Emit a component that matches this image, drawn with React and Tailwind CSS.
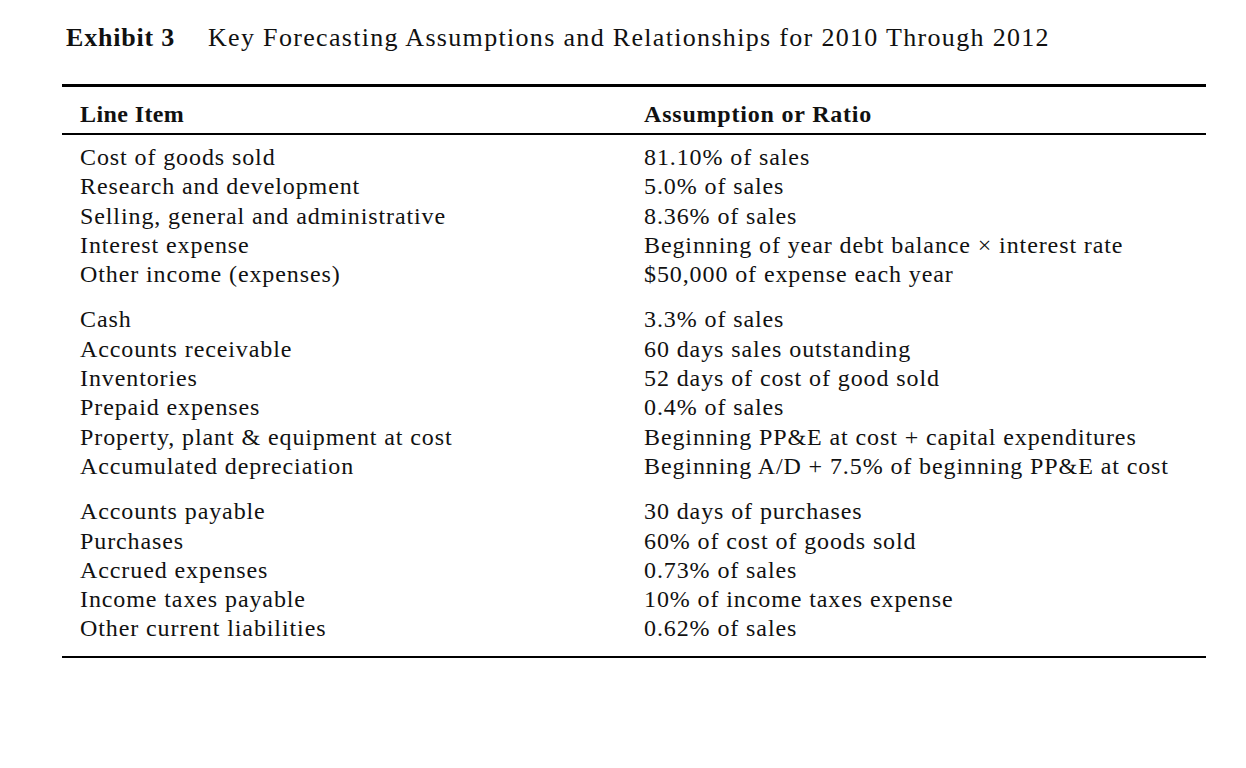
import React from "react";

const groups = [
  [
    ["Cost of goods sold", "81.10% of sales"],
    ["Research and development", "5.0% of sales"],
    ["Selling, general and administrative", "8.36% of sales"],
    ["Interest expense", "Beginning of year debt balance × interest rate"],
    ["Other income (expenses)", "$50,000 of expense each year"],
  ],
  [
    ["Cash", "3.3% of sales"],
    ["Accounts receivable", "60 days sales outstanding"],
    ["Inventories", "52 days of cost of good sold"],
    ["Prepaid expenses", "0.4% of sales"],
    ["Property, plant & equipment at cost", "Beginning PP&E at cost + capital expenditures"],
    ["Accumulated depreciation", "Beginning A/D + 7.5% of beginning PP&E at cost"],
  ],
  [
    ["Accounts payable", "30 days of purchases"],
    ["Purchases", "60% of cost of goods sold"],
    ["Accrued expenses", "0.73% of sales"],
    ["Income taxes payable", "10% of income taxes expense"],
    ["Other current liabilities", "0.62% of sales"],
  ],
];

const App = () => {
  return (
    <div className="min-h-screen bg-white text-[#111] font-['Liberation_Serif',serif] pt-[22px] pl-[62px]">
      <div className="w-[1144px]">
        {/* Title */}
        <h1 className="flex pl-[4px] text-[26px] leading-[32px]">
          <span className="font-bold w-[142px] tracking-[0.8px]">Exhibit 3</span>
          <span className="tracking-[1.32px]">
            Key Forecasting Assumptions and Relationships for 2010 Through 2012
          </span>
        </h1>

        {/* Table */}
        <div className="mt-[30px] border-t-[3px] border-black">
          <div className="grid grid-cols-[564px_1fr] pl-[18px] pt-[12px] pb-[4px] text-[24px] leading-[30px] font-bold border-b-[2px] border-black">
            <div className="tracking-[0.4px]">Line Item</div>
            <div className="tracking-[0.8px]">Assumption or Ratio</div>
          </div>

          <div className="pt-[8px] pb-[12px] border-b-[2px] border-black">
            {groups.map((rows, gi) => (
              <div key={gi} className={gi > 0 ? "mt-[16px]" : ""}>
                {rows.map(([item, ratio]) => (
                  <div
                    key={item}
                    className="grid grid-cols-[564px_1fr] pl-[18px] text-[24px] leading-[29.3px] tracking-[0.9px]"
                  >
                    <div>{item}</div>
                    <div>{ratio}</div>
                  </div>
                ))}
              </div>
            ))}
          </div>
        </div>
      </div>
    </div>
  );
};

export default App;
